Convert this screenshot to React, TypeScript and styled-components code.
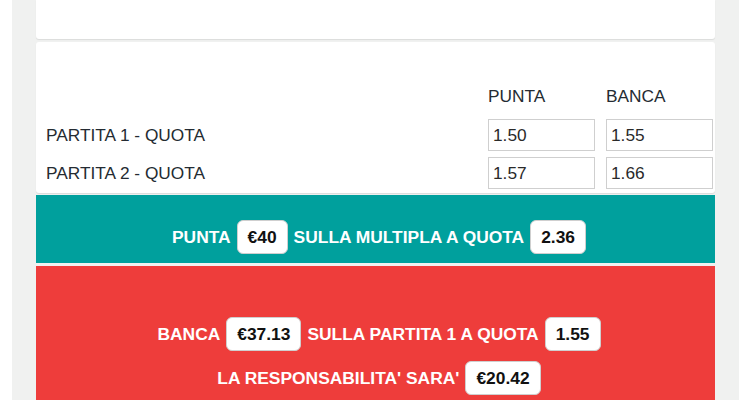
import React from "react";
import styled, { createGlobalStyle } from "styled-components";

const Global = createGlobalStyle`
  html, body { margin: 0; padding: 0; background: #ffffff; overflow: hidden; }
  body { font-family: "Liberation Sans", Arial, sans-serif; }
  * { box-sizing: border-box; }
`;

const Page = styled.div`
  margin-left: 12px;
  width: 727px;
  height: 400px;
  background: #f0f1f0;
  padding: 0 24px;
  display: flex;
  flex-direction: column;
  overflow: hidden;
`;

const Card = styled.div<{ $h: number; $gap?: number }>`
  flex: none;
  height: ${(p) => p.$h}px;
  margin-top: ${(p) => p.$gap ?? 0}px;
  background: #ffffff;
  border-radius: 3px;
  box-shadow: 0 1px 1px rgba(0, 0, 0, 0.09);
`;

const TopCard = styled(Card)`
  border-top-left-radius: 0;
  border-top-right-radius: 0;
`;

const OddsGrid = styled.div`
  display: grid;
  grid-template-columns: 1fr 107px 107px;
  column-gap: 11px;
  row-gap: 6px;
  align-items: center;
  padding: 44px 2px 0 10px;
  color: #242b32;
  font-size: 17.3px;
`;

const HeadCell = styled.div`
  line-height: 20px;
  padding-bottom: 7px;
`;

const Label = styled.div`
  line-height: 32px;
`;

const OddInput = styled.input`
  width: 107px;
  height: 32px;
  border: 1px solid #cfcfcf;
  border-radius: 0;
  padding: 0 4px;
  font-family: "Liberation Sans", Arial, sans-serif;
  font-size: 17.3px;
  color: #2a2a2a;
  background: #fff;
  outline: none;
`;

const Band = styled.div<{ $bg: string; $h: number; $gap: number; $pt: number }>`
  flex: none;
  height: ${(p) => p.$h}px;
  margin-top: ${(p) => p.$gap}px;
  background: ${(p) => p.$bg};
  padding-top: ${(p) => p.$pt}px;
  display: flex;
  flex-direction: column;
  gap: 10px;
`;

const Line = styled.div`
  display: flex;
  justify-content: center;
  align-items: center;
  gap: 6px;
  padding-left: 7px;
  height: 34px;
  color: #ffffff;
  font-weight: 700;
  font-size: 17.4px;
  white-space: nowrap;
`;

const Badge = styled.span`
  display: inline-block;
  height: 34px;
  line-height: 32px;
  padding: 0 10px;
  border: 1px solid #cfcfcf;
  border-radius: 6px;
  background: #ffffff;
  color: #111111;
  font-weight: 700;
  font-size: 17.4px;
`;

export default function App() {
  return (
    <>
      <Global />
      <Page>
        <TopCard $h={39} />
        <Card $h={151} $gap={3}>
          <OddsGrid>
            <div />
            <HeadCell>PUNTA</HeadCell>
            <HeadCell>BANCA</HeadCell>
            <Label>PARTITA 1 - QUOTA</Label>
            <OddInput defaultValue="1.50" />
            <OddInput defaultValue="1.55" />
            <Label>PARTITA 2 - QUOTA</Label>
            <OddInput defaultValue="1.57" />
            <OddInput defaultValue="1.66" />
          </OddsGrid>
        </Card>
        <Band $bg="#00a09d" $h={68} $gap={2} $pt={25}>
          <Line>
            PUNTA <Badge>€40</Badge> SULLA MULTIPLA A QUOTA <Badge>2.36</Badge>
          </Line>
        </Band>
        <Band $bg="#ee3d3b" $h={200} $gap={3} $pt={51}>
          <Line>
            BANCA <Badge>€37.13</Badge> SULLA PARTITA 1 A QUOTA <Badge>1.55</Badge>
          </Line>
          <Line>
            LA RESPONSABILITA' SARA' <Badge>€20.42</Badge>
          </Line>
        </Band>
      </Page>
    </>
  );
}
